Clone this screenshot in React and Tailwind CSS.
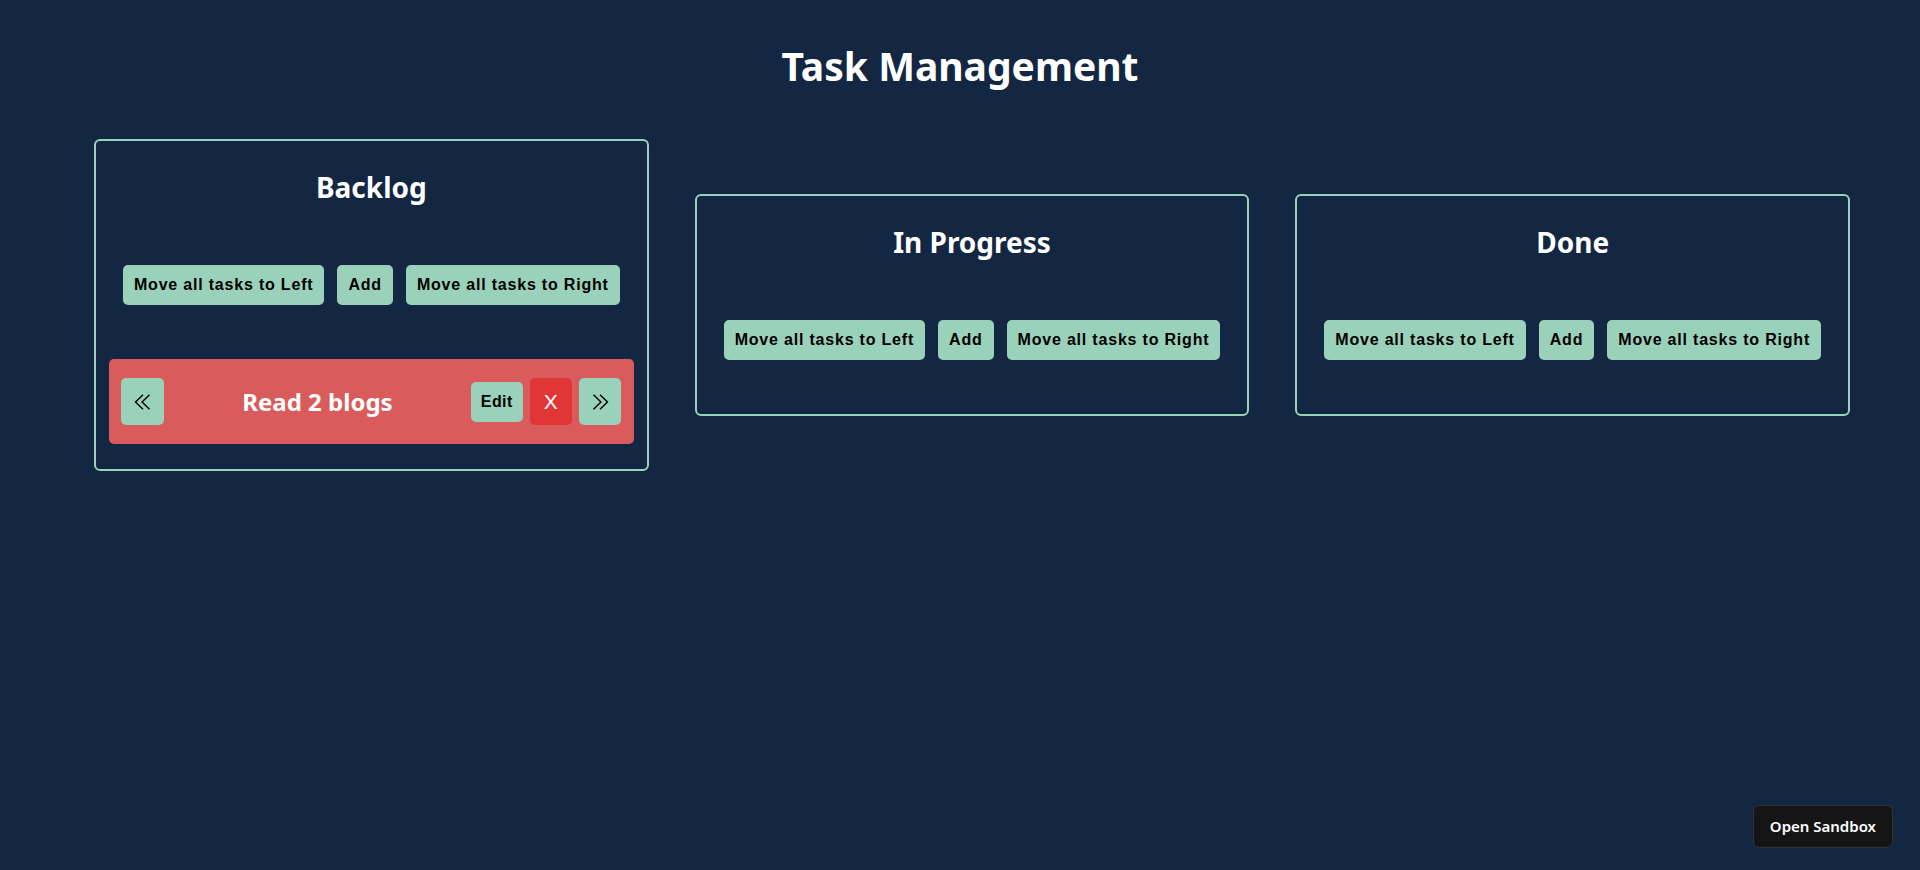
import React from "react";

const btn =
  "h-[40px] px-[11px] rounded-[5px] bg-[#99d1ba] text-black text-[16px] font-bold tracking-wider font-['Liberation_Sans',Arial,sans-serif] leading-none";

function ChevL() {
  return (
    <svg width="18" height="16" viewBox="0 0 18 16" fill="none" stroke="#000" strokeWidth="1.4">
      <path d="M9 0.7 L1.5 8 L9 15.3 M15.5 0.7 L8 8 L15.5 15.3" />
    </svg>
  );
}
function ChevR() {
  return (
    <svg width="18" height="16" viewBox="0 0 18 16" fill="none" stroke="#000" strokeWidth="1.4">
      <path d="M2.5 0.7 L10 8 L2.5 15.3 M9 0.7 L16.5 8 L9 15.3" />
    </svg>
  );
}

function Column({ title, tasks }) {
  return (
    <div className="flex-1 border-2 border-[#99d1ba] rounded-[6px] px-[13px] pt-[26px] pb-[25px] flex flex-col">
      <h2 className="text-center text-white text-[28px] font-bold leading-[40px] font-['Noto_Sans',sans-serif]">
        {title}
      </h2>
      <div className="mt-[58px] mb-[29px] flex justify-center gap-[13px]">
        <button className={btn}>Move all tasks to Left</button>
        <button className={btn}>Add</button>
        <button className={btn}>Move all tasks to Right</button>
      </div>
      <div className="flex flex-col">
        {tasks.map((t) => (
          <div
            key={t}
            className="mt-[25px] h-[85px] bg-[#da5b5b] rounded-[5px] pl-[12px] pr-[13px] flex items-center"
          >
            <button className="w-[43px] h-[47px] rounded-[5px] bg-[#99d1ba] flex items-center justify-center">
              <ChevL />
            </button>
            <div className="flex-1 text-center text-white text-[24px] font-bold font-['Noto_Sans',sans-serif] leading-none">
              {t}
            </div>
            <div className="flex items-center gap-[7px]">
              <button className="h-[40px] px-[10px] rounded-[5px] bg-[#99d1ba] text-black text-[16px] font-bold tracking-wide font-['Liberation_Sans',Arial,sans-serif] leading-none">
                Edit
              </button>
              <button className="w-[42px] h-[47px] rounded-[5px] bg-[#e23636] text-white text-[21px] font-normal font-['Liberation_Sans',Arial,sans-serif] flex items-center justify-center leading-none">
                X
              </button>
              <button className="w-[42px] h-[47px] rounded-[5px] bg-[#99d1ba] flex items-center justify-center">
                <ChevR />
              </button>
            </div>
          </div>
        ))}
      </div>
    </div>
  );
}

export default function App() {
  return (
    <div className="min-h-[870px] w-full bg-[#132642] font-['Noto_Sans',sans-serif]">
      <h1 className="pt-[38px] text-center text-white text-[39px] font-bold leading-[56px]">
        Task Management
      </h1>
      <div className="mt-[45px] flex items-center pl-[94px] pr-[70px] gap-[46px]">
        <Column title="Backlog" tasks={["Read 2 blogs"]} />
        <Column title="In Progress" tasks={[]} />
        <Column title="Done" tasks={[]} />
      </div>
      <button className="fixed right-[27px] bottom-[22px] h-[43px] px-[16px] rounded-[6px] bg-[#151515] border border-[#333333] text-white text-[15px] font-semibold font-['Noto_Sans',sans-serif]">
        Open Sandbox
      </button>
    </div>
  );
}
